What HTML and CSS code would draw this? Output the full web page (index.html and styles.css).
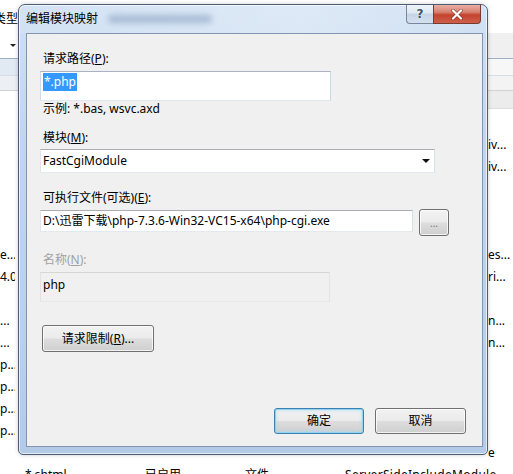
FILE: index.html
```html
<!DOCTYPE html>
<html lang="zh-CN">
<head>
<meta charset="utf-8">
<title>编辑模块映射</title>
<link rel="stylesheet" href="styles.css">
</head>
<body>
<div class="bg">
  <div class="bg-top"><span class="bg-type">类型</span></div>
  <div class="bg-tool"><div class="bt-l"><span class="bt-arrow"></span></div><div class="bt-r"></div></div>
  <div class="bg-band1"><div class="b-l"></div><div class="b-r"></div></div>
  <div class="bg-band2"><div class="b-l"></div><div class="b-r"></div></div>
  <div class="bg-head"><div class="b-l"></div><div class="b-r"></div></div>
  <div class="bg-gap"></div>
  <div class="row"><span class="c-l"></span><span class="c-r">iv...</span></div>
  <div class="row"><span class="c-l"></span><span class="c-r">iv...</span></div>
  <div class="row"><span class="c-l"></span><span class="c-r"></span></div>
  <div class="row"><span class="c-l"></span><span class="c-r"></span></div>
  <div class="row"><span class="c-l"></span><span class="c-r"></span></div>
  <div class="row"><span class="c-l">e...</span><span class="c-r">es...</span></div>
  <div class="row"><span class="c-l">4.0</span><span class="c-r">ri...</span></div>
  <div class="row"><span class="c-l"></span><span class="c-r"></span></div>
  <div class="row"><span class="c-l c-dots">...</span><span class="c-r">n...</span></div>
  <div class="row"><span class="c-l c-dots">...</span><span class="c-r">n...</span></div>
  <div class="row"><span class="c-l">p...</span><span class="c-r"></span></div>
  <div class="row"><span class="c-l">p...</span><span class="c-r"></span></div>
  <div class="row"><span class="c-l">p...</span><span class="c-r"></span></div>
  <div class="row"><span class="c-l">p...</span><span class="c-r"></span></div>
  <div class="row"><span class="c-l"></span><span class="c-r">e</span></div>
  <div class="row last"><span class="c1">*.shtml</span><span class="c2">已启用</span><span class="c3">文件</span><span class="c4">ServerSideIncludeModule</span></div>
</div>

<div class="dlg">
  <div class="titlebar">
    <span class="title">编辑模块映射</span>
    <span class="blur"></span>
    <div class="caps">
      <span class="cap help">?</span>
      <span class="cap close"><svg width="14" height="11" viewBox="0 0 14 11"><path d="M3 1.5 L11 9.5 M11 1.5 L3 9.5" stroke="#5a1a12" stroke-width="3.6" stroke-linecap="round" fill="none" opacity="0.55"/><path d="M3 1.5 L11 9.5 M11 1.5 L3 9.5" stroke="#ffffff" stroke-width="2.2" stroke-linecap="round" fill="none"/></svg></span>
    </div>
  </div>
  <div class="client">
    <div class="lbl l1">请求路径(<u>P</u>):</div>
    <div class="tb tb1"><span class="sel">*.php</span></div>
    <div class="lbl hint">示例: *.bas, wsvc.axd</div>
    <div class="lbl l2">模块(<u>M</u>):</div>
    <div class="combo"><span>FastCgiModule</span><span class="dd"></span></div>
    <div class="lbl l3">可执行文件(可选)(<u>E</u>):</div>
    <div class="exe-row">
      <div class="tb tb3">D:\迅雷下载\php-7.3.6-Win32-VC15-x64\php-cgi.exe</div>
      <div class="btn browse">...</div>
    </div>
    <div class="lbl l4 dis">名称(<u>N</u>):</div>
    <div class="tb tb4">php</div>
    <div class="btn req">请求限制(<u>R</u>)...</div>
    <div class="footer">
      <div class="btn def">确定</div>
      <div class="btn">取消</div>
    </div>
  </div>
</div>
</body>
</html>
```

FILE: styles.css
```css
html, body {
  margin: 0;
  padding: 0;
}
body {
  width: 513px;
  height: 474px;
  overflow: hidden;
  position: relative;
  background: #ffffff;
  color: #000;
  font-family: "Noto Sans", "Noto Sans CJK SC", sans-serif;
  font-size: 12px;
  line-height: 16px;
}
u { text-decoration: underline; text-underline-offset: 1px; }

/* background window */
.bg {
  display: flex;
  flex-direction: column;
  width: 513px;
}
.bg-top {
  height: 33px;
  padding-top: 11px;
  box-sizing: border-box;
}
.bg-type { display: inline-block; margin-left: -6px; }
.bg-tool {
  height: 25px;
  display: flex;
  border-bottom: 1px solid #9fb0c4;
}
.bt-l {
  width: 30px;
  background: #fff;
  position: relative;
}
.bt-arrow {
  position: absolute;
  left: 10px;
  top: 11px;
  border-left: 3px solid transparent;
  border-right: 3px solid transparent;
  border-top: 3px solid #222;
}
.bt-r { flex: 1; background: #f0f0f0; }
.bg-band1, .bg-band2, .bg-head { display: flex; }
.b-l { width: 30px; }
.b-r { flex: 1; }
.bg-band1 { height: 16px; border-bottom: 1px solid #d6dde6; }
.bg-band1 .b-l { background: #e1e9f3; }
.bg-band1 .b-r { background: #f7f7f7; }
.bg-band2 { height: 14px; border-bottom: 1px solid #d2d2d2; }
.bg-band2 .b-l { background: #eceff3; }
.bg-band2 .b-r { background: #f3f3f3; }
.bg-head { height: 18px; }
.bg-head .b-l { background: #fff; }
.bg-head .b-r { background: #ececec; border-bottom: 1px solid #dedede; }
.bg-gap { height: 25px; }
.row {
  height: 22px;
  display: flex;
  align-items: center;
  white-space: nowrap;
}
.c-l {
  width: 15px;
  text-align: right;
  overflow: hidden;
}
.c-l.c-dots { width: 9px; }
.c-r {
  margin-left: auto;
  width: 25px;
  overflow: hidden;
}
.row.last { overflow: hidden; }
.c1 { margin-left: 25px; width: 120px; }
.c2 { width: 100px; }
.c3 { width: 100px; }
.c4 { letter-spacing: 0.3px; }

/* dialog */
.dlg {
  position: absolute;
  left: 18px;
  top: 4px;
  width: 470px;
  height: 451px;
  box-sizing: border-box;
  border: 1px solid #4d5d73;
  border-radius: 7px 7px 5px 5px;
  background: linear-gradient(180deg, #cfe0f3 0%, #c1d6ee 30%, #b9d1eb 70%, #b3cbe7 100%);
  box-shadow: inset 0 0 0 1px rgba(255,255,255,0.65), 0 0 4px rgba(0,0,0,0.2);
  display: flex;
  flex-direction: column;
}
.titlebar {
  height: 28px;
  display: flex;
  align-items: flex-start;
  position: relative;
  background: linear-gradient(90deg, rgba(255,255,255,0.1), rgba(255,255,255,0.3) 60%, rgba(255,255,255,0.08));
  border-radius: 6px 6px 0 0;
}
.title {
  padding-left: 7px;
  margin-top: 6px;
  line-height: 16px;
  color: #000;
}
.blur {
  width: 104px;
  height: 8px;
  margin-left: 10px;
  margin-top: 10px;
  background: #7d97b8;
  border-radius: 4px;
  filter: blur(3px);
  opacity: 0.55;
}
.caps {
  margin-left: auto;
  margin-right: 6px;
  display: flex;
}
.cap {
  height: 19px;
  box-sizing: border-box;
  display: flex;
  align-items: center;
  justify-content: center;
}
.help {
  width: 27px;
  border: 1px solid #77879c;
  border-top: none;
  border-right: none;
  border-radius: 0 0 0 4px;
  background: linear-gradient(180deg, #eef3f9 0%, #dde7f2 45%, #c5d4e5 50%, #d4e0ee 100%);
  color: #3f516a;
  font-weight: bold;
  font-size: 12px;
  font-family: "DejaVu Sans", sans-serif;
  text-shadow: 0 0 2px #fff;
}
.close {
  width: 48px;
  border: 1px solid #7a3a30;
  border-top: none;
  border-radius: 0 0 4px 0;
  background: linear-gradient(180deg, #e8b0a4 0%, #d7806f 40%, #c4432e 55%, #cf5f4a 100%);
}
.client {
  flex: 1;
  margin: 0 4px 7px 7px;
  box-sizing: border-box;
  border: 1px solid #8395b0;
  background: #f0f0f0;
  display: flex;
  flex-direction: column;
  align-items: flex-start;
  padding: 17px 16px 12px 13px;
}
.lbl {
  height: 16px;
  line-height: 16px;
  padding-left: 3px;
  white-space: nowrap;
}
.dis { color: #a0a0a0; }
.tb {
  box-sizing: border-box;
  border: 1px solid;
  border-color: #abadb3 #dbdfe6 #e3e9ef #e2e3ea;
  background: #fff;
  padding: 1px 2px;
  line-height: 16px;
  white-space: nowrap;
  overflow: hidden;
}
.tb1 {
  width: 291px;
  height: 30px;
  margin-top: 4px;
  border-color: #a9b3c1 #c9d8e8 #dfe8f1 #d2dae4;
}
.sel {
  display: inline-block;
  background: #3399ff;
  color: #fff;
  line-height: 18px;
  padding: 0 1px;
}
.l2 { margin-top: 13px; }
.combo {
  margin-top: 3px;
  width: 395px;
  height: 24px;
  box-sizing: border-box;
  border: 1px solid;
  border-color: #abadb3 #dbdfe6 #e3e9ef #e2e3ea;
  background: #fff;
  display: flex;
  align-items: center;
  padding: 0 0 0 2px;
}
.dd {
  margin-left: auto;
  margin-right: 4px;
  border-left: 4px solid transparent;
  border-right: 4px solid transparent;
  border-top: 4px solid #111;
}
.l3 { margin-top: 17px; }
.exe-row {
  margin-top: 3px;
  display: flex;
  align-items: flex-start;
  gap: 6px;
}
.tb3 {
  width: 373px;
  height: 22px;
  margin-top: 1px;
  padding: 2px 2px;
  line-height: 16px;
}
.btn {
  box-sizing: border-box;
  border: 1px solid #707070;
  border-radius: 3px;
  background: linear-gradient(180deg, #f2f2f2 0%, #ebebeb 48%, #dddddd 52%, #cfcfcf 100%);
  box-shadow: inset 0 0 0 1px rgba(255,255,255,0.75);
  display: flex;
  align-items: center;
  justify-content: center;
  line-height: 16px;
  white-space: nowrap;
}
.browse {
  width: 30px;
  height: 27px;
  color: #777;
  font-size: 10px;
}
.l4 { margin-top: 16px; }
.tb4 {
  width: 290px;
  height: 30px;
  margin-top: 4px;
  background: #f0f0f0;
  border-color: #d6d6d6 #e4e4e4 #e8e8e8 #e2e2e2;
  padding: 4px 2px;
}
.req {
  margin-top: 23px;
  margin-left: 2px;
  width: 112px;
  height: 27px;
}
.footer {
  margin-top: auto;
  align-self: stretch;
  display: flex;
  justify-content: flex-end;
  gap: 11px;
}
.footer .btn {
  width: 91px;
  height: 26px;
}
.footer .btn.def {
  width: 90px;
  border-color: #3c7fb1;
  box-shadow: inset 0 0 0 1px #8fd3f0, inset 0 0 3px 2px rgba(150,215,245,0.45);
}
```
